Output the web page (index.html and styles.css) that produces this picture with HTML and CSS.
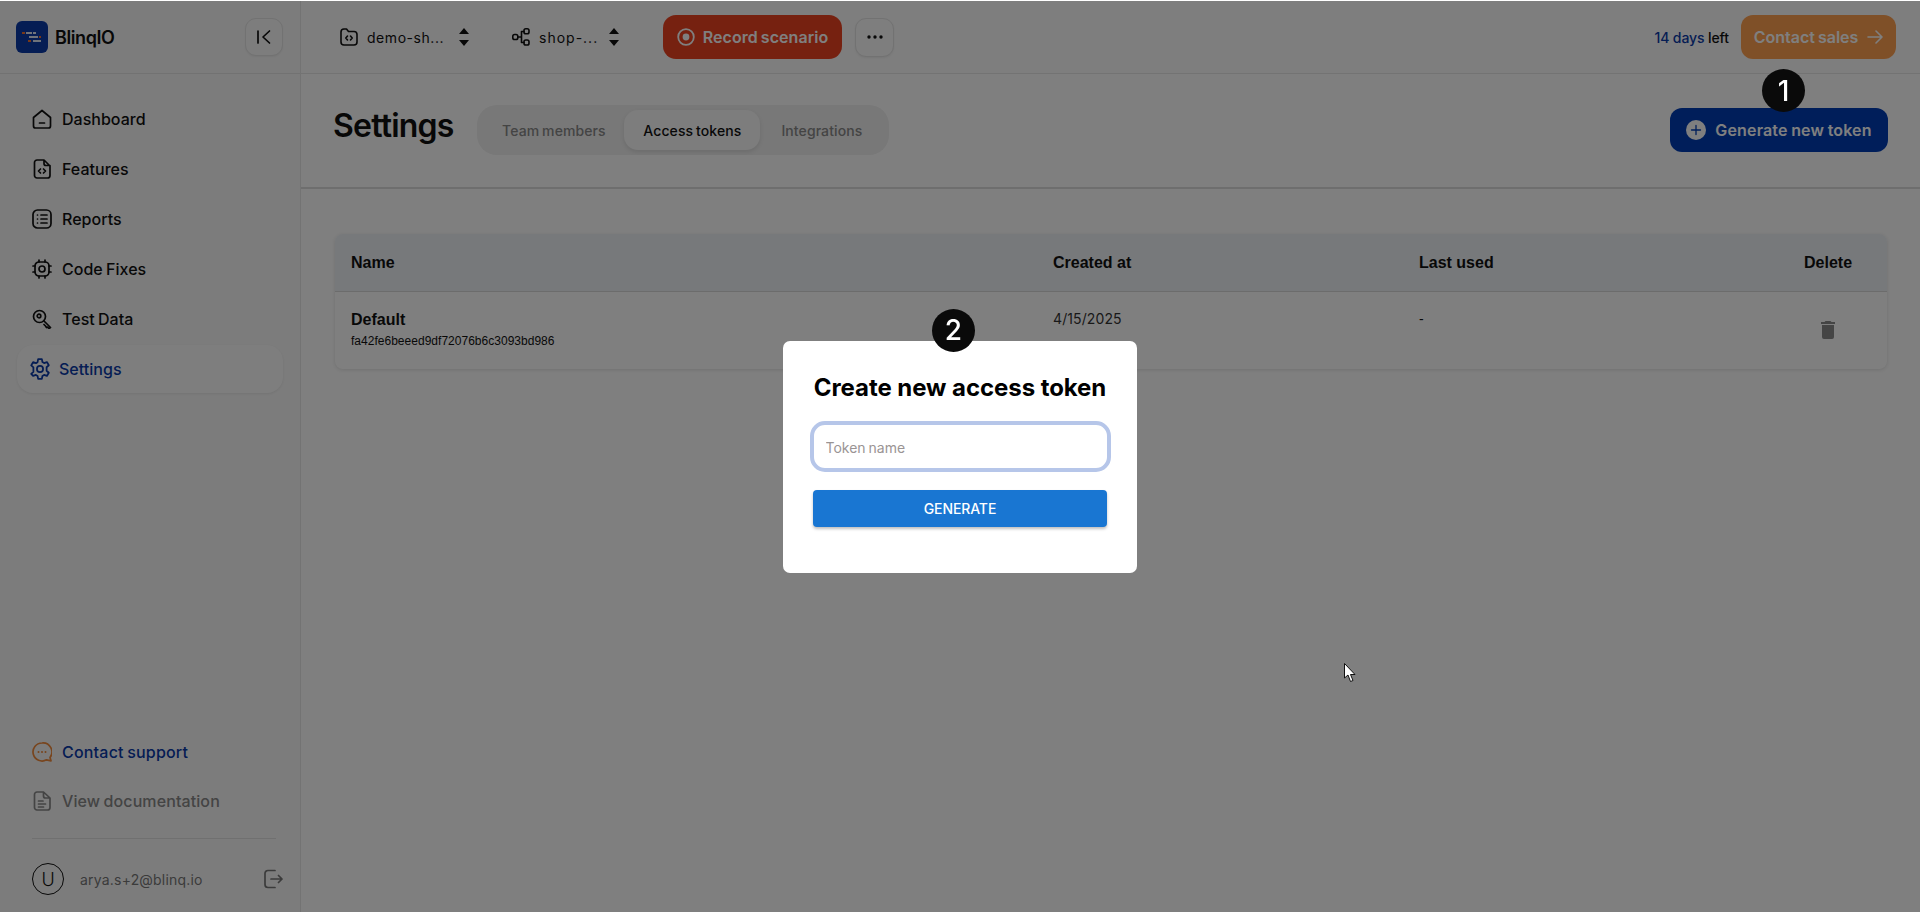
FILE: index.html
```html
<!DOCTYPE html>
<html lang="en">
<head>
<meta charset="utf-8">
<title>BlinqIO Settings</title>
<link rel="stylesheet" href="styles.css">
</head>
<body>
<div class="app">
  <aside class="sidebar">
    <div class="brand">
      <div class="logo">
        <svg viewBox="0 0 32 32" width="32" height="32"><rect width="32" height="32" rx="6" fill="#0a3aa8"/><g fill="#dfe6f5"><rect x="10" y="11" width="6" height="2"/><rect x="17" y="11" width="3" height="2"/><rect x="13" y="15" width="9" height="2"/><rect x="17" y="19" width="8" height="2"/></g><g fill="#f07030"><rect x="6" y="11" width="3" height="2"/><rect x="12" y="19" width="3" height="2"/><rect x="23" y="15" width="2" height="2"/></g></svg>
      </div>
      <span class="brand-name">BlinqIO</span>
      <button class="icon-btn collapse">
        <svg viewBox="0 0 16 16" width="16" height="16" fill="none" stroke="#111" stroke-width="1.7" stroke-linecap="round" stroke-linejoin="round"><path d="M2 2v12M13.500 2 7 8l6.500 6"/></svg>
      </button>
    </div>
    <nav class="nav">
      <a class="nav-item"><svg class="nav-icon" viewBox="0 0 20 20" fill="none" stroke="#111" stroke-width="1.700" stroke-linecap="round" stroke-linejoin="round"><path d="M1.500 8.500 10 1.500l8.500 7V17a2 2 0 0 1-2 2h-13a2 2 0 0 1-2-2zM7.500 14h5"/></svg>Dashboard</a>
      <a class="nav-item"><svg class="nav-icon" viewBox="0 0 20 20" fill="none" stroke="#111" stroke-width="1.700" stroke-linecap="round" stroke-linejoin="round"><path d="M5 1h7l6 6v9.500a2.500 2.500 0 0 1-2.500 2.500H5a2.500 2.500 0 0 1-2.500-2.500v-13A2.500 2.500 0 0 1 5 1zM12 1v3.500a2 2 0 0 0 2 2h4M8.500 10 6.500 12l2 2M11.500 10l2 2-2 2"/></svg>Features</a>
      <a class="nav-item"><svg class="nav-icon" viewBox="0 0 20 20" fill="none" stroke="#111" stroke-width="1.700" stroke-linecap="round" stroke-linejoin="round"><rect x="1" y="1" width="18" height="18" rx="4.500"/><path d="M9 6h6M9 10h6M9 14h6M5.500 6h.01M5.500 10h.01M5.500 14h.01"/></svg>Reports</a>
      <a class="nav-item"><svg class="nav-icon" viewBox="0 0 20 20" fill="none" stroke="#111" stroke-width="1.700" stroke-linecap="round" stroke-linejoin="round"><rect x="3" y="3" width="14" height="14" rx="4"/><circle cx="10" cy="10" r="3"/><path d="M7 1v2M13 1v2M7 17v2M13 17v2M1 7h2M1 13h2M17 7h2M17 13h2"/></svg>Code Fixes</a>
      <a class="nav-item"><svg class="nav-icon" viewBox="0 0 20 20" fill="none" stroke="#111" stroke-width="1.700" stroke-linecap="round" stroke-linejoin="round"><circle cx="7.500" cy="7.500" r="6"/><circle cx="7" cy="7" r="1.800"/><path d="m12 12 6.500 6.500-1.500 1-1.500-1.500-1 .5-1-1.500-1.500-1.500"/></svg>Test Data</a>
      <a class="nav-item active"><svg class="nav-icon gear" viewBox="0 0 20 20" fill="none" stroke="#0a3aa8" stroke-width="1.600" stroke-linecap="round" stroke-linejoin="round"><circle cx="10" cy="10" r="2.800"/><path d="M8.300 1h3.400l.5 2.700 1.500.9 2.600-.9 1.700 2.900-2 1.800v3.200l2 1.800-1.700 2.900-2.600-.9-1.500.9-.5 2.700H8.300l-.5-2.700-1.500-.9-2.600.9L2 14.500l2-1.800V8.500l-2-1.800 1.700-2.900 2.600.9 1.500-.9z"/></svg>Settings</a>
    </nav>
    <div class="side-foot">
      <a class="nav-item support"><svg class="nav-icon" viewBox="0 0 20 20" fill="none" stroke="#f08a3c" stroke-width="1.700" stroke-linecap="round" stroke-linejoin="round"><path d="M10 1a9 9 0 1 0 4.500 16.800l4.500 1-1-3.300A9 9 0 0 0 10 1z"/><path d="M6.500 10h.01M10 10h.01M13.500 10h.01" stroke-width="2"/></svg>Contact support</a>
      <a class="nav-item docs"><svg class="nav-icon" viewBox="0 0 20 20" fill="none" stroke="#888" stroke-width="1.700" stroke-linecap="round" stroke-linejoin="round"><path d="M5 1h6.500L18 7v9.500a2.500 2.500 0 0 1-2.500 2.500H5a2.500 2.500 0 0 1-2.500-2.500v-13A2.500 2.500 0 0 1 5 1zM11.500 1v4a2 2 0 0 0 2 2H18M6.500 10H11M6.500 13h7M6.500 16h5"/></svg>View documentation</a>
      <div class="foot-rule"></div>
      <div class="user">
        <span class="avatar">U</span>
        <span class="email">arya.s+2@blinq.io</span>
        <svg class="logout" viewBox="0 0 20 20" fill="none" stroke="#777" stroke-width="1.700" stroke-linecap="round" stroke-linejoin="round"><path d="M12 1.500H5A3 3 0 0 0 2 4.500v11a3 3 0 0 0 3 3h7M8 10h11M15.500 6.500 19 10l-3.500 3.500"/></svg>
      </div>
    </div>
  </aside>
  <main class="main">
    <header class="topbar">
      <div class="selector first">
        <svg class="sel-icon" viewBox="0 0 18 18" fill="none" stroke="#111" stroke-width="1.600" stroke-linecap="round" stroke-linejoin="round"><path d="M1 4a3 3 0 0 1 3-3h2.500l2 2.500H14a3 3 0 0 1 3 3V14a3 3 0 0 1-3 3H4a3 3 0 0 1-3-3zM7.500 8 5.800 10l1.700 2M10.500 8l1.700 2-1.700 2"/></svg>
        <span class="sel-text t1">demo-sh...</span>
        <svg class="updown" viewBox="0 0 10 18" fill="#111"><path d="M5 0 10 6H0zM5 18 0 12h10z"/></svg>
      </div>
      <div class="selector second">
        <svg class="sel-icon" viewBox="0 0 18 18" fill="none" stroke="#111" stroke-width="1.600" stroke-linecap="round" stroke-linejoin="round"><rect x=".8" y="6.500" width="5" height="5" rx="1.800"/><rect x="12" y=".8" width="5" height="5" rx="1.800"/><rect x="12" y="12" width="5" height="5" rx="1.800"/><path d="M5.800 9H9M12 3.500H9.500V14.500H12"/></svg>
        <span class="sel-text t2">shop-...</span>
        <svg class="updown" viewBox="0 0 10 18" fill="#111"><path d="M5 0 10 6H0zM5 18 0 12h10z"/></svg>
      </div>
      <button class="record">
        <svg viewBox="0 0 18 18" width="18" height="18" fill="none"><circle cx="9" cy="9" r="7.800" stroke="#fff" stroke-width="1.800"/><circle cx="9" cy="9" r="3.400" fill="#fff"/></svg>
        Record scenario
      </button>
      <button class="icon-btn more">
        <svg viewBox="0 0 16 4" width="16" height="4" fill="#111"><circle cx="2" cy="2" r="1.700"/><circle cx="8" cy="2" r="1.700"/><circle cx="14" cy="2" r="1.700"/></svg>
      </button>
      <div class="trial"><span class="days">14 days</span> left</div>
      <button class="sales">Contact sales
        <svg viewBox="0 0 16 14" width="16" height="14" fill="none" stroke="#fff" stroke-width="1.600" stroke-linecap="round" stroke-linejoin="round"><path d="M1 7h14M9 1l6 6-6 6"/></svg>
      </button>
    </header>
    <section class="page-head">
      <h1 class="title">Settings</h1>
      <div class="tabs">
        <span class="tab">Team members</span>
        <span class="tab on">Access tokens</span>
        <span class="tab">Integrations</span>
      </div>
      <button class="generate">
        <svg viewBox="0 0 20 20" width="20" height="20"><circle cx="10" cy="10" r="10" fill="#fff"/><path d="M10 5.500v9M5.500 10h9" stroke="#003db5" stroke-width="1.300" stroke-linecap="round"/></svg>
        Generate new token
      </button>
    </section>
    <section class="table-wrap">
      <div class="table">
        <div class="row head">
          <div class="c1">Name</div>
          <div class="c2">Created at</div>
          <div class="c3">Last used</div>
          <div class="c4">Delete</div>
        </div>
        <div class="row body-row">
          <div class="c1"><div class="tok-name">Default</div><div class="tok-hash">fa42fe6beeed9df72076b6c3093bd986</div></div>
          <div class="c2 date">4/15/2025</div>
          <div class="c3 dash">-</div>
          <div class="c4 trash"><svg viewBox="0 0 14 18" width="14" height="18" fill="#8a8a8a"><path d="M1 16a2 2 0 0 0 2 2h8a2 2 0 0 0 2-2V4H1zM14 1h-3.500l-1-1h-5l-1 1H0v2h14z"/></svg></div>
        </div>
      </div>
    </section>
  </main>
</div>
<div class="overlay">
  <div class="modal">
    <span class="step step2">2</span>
    <h2 class="modal-title">Create new access token</h2>
    <input class="token-input" type="text" placeholder="Token name">
    <button class="gen-btn">GENERATE</button>
  </div>
  <span class="step step1">1</span>
  <svg class="cursor" viewBox="0 0 12 20" width="12" height="20"><path d="M.5.500V15l3.500-3 2.500 6.500 2.500-1L6.500 11.500H11z" fill="#fff" stroke="#111" stroke-width="1"/></svg>
</div>
</body>
</html>
```
FILE: styles.css
```css
* { box-sizing: border-box; }
html, body { margin: 0; height: 912px; overflow: hidden; background: #fff; }
body { font-family: "Inter", "Liberation Sans", sans-serif; color: #111; padding-top: 1px; }
button { font-family: inherit; border: 0; cursor: pointer; }
.app { display: flex; height: 911px; }

.sidebar { width: 301px; flex: none; background: #f9f9f9; border-right: 1px solid #e6e6e6; display: flex; flex-direction: column; }
.brand { height: 73px; border-bottom: 1px solid #e4e4e4; display: flex; align-items: center; padding: 0 17px 0 16px; flex: none; }
.logo { width: 32px; height: 32px; }
.logo svg { display: block; }
.brand-name { margin-left: 7px; font-size: 18px; font-weight: 600; letter-spacing: -.4px; }
.icon-btn { width: 38px; height: 38px; background: #fbfbfb; border: 1px solid #e4e4e4; border-radius: 11px; display: flex; align-items: center; justify-content: center; padding: 0; box-shadow: 0 1px 2px rgba(0,0,0,.06); }
.collapse { margin-left: auto; }

.nav { padding: 21px 17px 0; display: flex; flex-direction: column; gap: 2px; }
.nav-item { height: 48px; display: flex; align-items: center; gap: 10px; padding-left: 15px; font-size: 16px; letter-spacing: .02px; word-spacing: -1px; font-weight: 500; color: #111; }
.nav-icon { width: 20px; height: 20px; flex: none; }
.active { background: #fcfcfc; color: #0a3aa8; border-radius: 16px; padding-left: 12px; gap: 8px; box-shadow: 0 1px 3px rgba(0,0,0,.08); }
.gear { width: 22px; height: 22px; }

.side-foot { margin-top: auto; padding: 0 17px 13px; }
.support { color: #0a3aa8; letter-spacing: .2px; }
.docs { color: #888; height: 50px; letter-spacing: .1px; }
.foot-rule { height: 1px; background: #e0e0e0; margin: 12px 7px 20px 15px; }
.user { display: flex; align-items: center; height: 40px; padding-left: 15px; }
.avatar { width: 32px; height: 32px; border-radius: 50%; border: 1px solid #111; display: flex; align-items: center; justify-content: center; font-size: 18px; font-weight: 300; }
.email { margin-left: 16px; font-size: 14px; color: #777; letter-spacing: .2px; }
.logout { width: 20px; height: 20px; margin-left: auto; }

.main { flex: 1; min-width: 0; display: flex; flex-direction: column; background: #fff; }
.topbar { height: 73px; background: #fcfcfc; border-bottom: 1px solid #e6e6e6; display: flex; align-items: center; padding: 0 24px 0 39px; flex: none; }
.selector { display: flex; align-items: center; }
.sel-icon { width: 18px; height: 18px; flex: none; }
.sel-text { font-size: 14px; letter-spacing: .55px; margin-left: 9px; white-space: nowrap; }
.t1 { width: 77px; }
.t2 { width: 55px; margin-left: 9px; letter-spacing: 1px; }
.updown { width: 10px; height: 18px; margin-left: 15px; }
.second { margin-left: 43px; }
.record { margin-left: 44px; width: 179px; height: 44px; border-radius: 13px; background: #ec4220; color: #fff; font-size: 16px; font-weight: 600; letter-spacing: .05px; word-spacing: -1px; display: flex; align-items: center; justify-content: center; gap: 8px; padding: 0; }
.more { margin-left: 13px; width: 39px; height: 39px; background: #fcfcfc; }
.trial { margin-left: auto; font-size: 14px; font-weight: 500; letter-spacing: -.1px; }
.days { color: #0a3aa8; }
.sales { margin-left: 12px; width: 155px; height: 44px; border-radius: 12px; background: #ffa050; color: #fff; font-size: 16px; font-weight: 600; letter-spacing: 0; word-spacing: -1px; display: flex; align-items: center; justify-content: center; gap: 9px; padding: 0; }

.page-head { height: 115px; border-bottom: 2px solid #ddd; display: flex; align-items: center; padding: 0 32px 1px 32px; flex: none; margin-bottom: 45px; }
.title { margin: 0; font-size: 32px; font-weight: 600; letter-spacing: -.8px; position: relative; top: -5px; }
.tabs { margin-left: 24px; height: 50px; width: 412px; background: #f0f0f0; border-radius: 20px; display: flex; align-items: center; padding: 0 6px; }
.tab { font-size: 14px; font-weight: 500; letter-spacing: .1px; word-spacing: -1px; color: #888; height: 40px; display: flex; align-items: center; justify-content: center; }
.tab:nth-child(1) { width: 143px; }
.tab.on { width: 138px; background: #fafafa; color: #111; border-radius: 14px; box-shadow: 0 2px 4px rgba(0,0,0,.1); }
.tab:nth-child(3) { width: 125px; }
.generate { margin-left: auto; width: 218px; height: 44px; border-radius: 12px; background: #003db5; color: #fff; font-size: 16px; font-weight: 600; letter-spacing: .15px; word-spacing: -.6px; display: flex; align-items: center; justify-content: center; gap: 9px; padding: 0; }

.table-wrap { padding: 0 33px 0 34px; }
.table { background: #fff; border-radius: 8px; box-shadow: 0 1px 4px rgba(0,0,0,.12); font-family: "Liberation Sans", Arial, sans-serif; overflow: hidden; }
.row { display: grid; grid-template-columns: 702px 366px 1fr 96px; padding-left: 16px; }
.head { height: 58px; background: #eef2f7; border-bottom: 1px solid #d8d8d8; align-items: center; font-size: 16px; font-weight: 700; }
.c4 { text-align: left; padding-left: 13px; }
.body-row { height: 77px; padding-top: 18px; }
.tok-name { font-size: 16px; font-weight: 700; line-height: 19px; }
.tok-hash { font-size: 12px; margin-top: 5px; line-height: 14px; letter-spacing: .02px; }
.date { font-family: "Inter", sans-serif; font-size: 14px; color: #333; line-height: 17px; letter-spacing: .1px; }
.dash { font-size: 14px; line-height: 19px; }
.trash { padding: 11px 0 0 30px; }
.trash svg { display: block; }

.overlay { position: fixed; inset: 1px 0 0 0; background: rgba(0,0,0,.5); display: flex; align-items: center; justify-content: center; }
.modal { position: relative; width: 354px; height: 232px; background: #fff; border-radius: 7px; display: flex; flex-direction: column; align-items: center; padding-top: 30px; }
.modal-title { margin: 0; font-size: 24px; font-weight: 700; line-height: 34px; letter-spacing: -.06px; white-space: nowrap; color: #000; }
.token-input { margin-top: 16px; width: 301px; height: 51px; border: 4px solid #b6c6e9; border-radius: 15px; padding: 2px 12px 0; font-family: "Inter", sans-serif; font-size: 14px; outline: none; background: #fff; }
.token-input::placeholder { color: #9a9494; letter-spacing: 0; word-spacing: -1px; }
.gen-btn { margin-top: 18px; width: 294px; height: 37px; border-radius: 4px; background: #1976d2; color: #fff; font-size: 14px; font-weight: 500; box-shadow: 0 2px 3px rgba(0,0,0,.25); padding: 0; letter-spacing: -.1px; }
.step { position: absolute; width: 43px; height: 43px; border-radius: 50%; background: #0a0a0a; color: #fff; font-size: 28px; font-weight: 500; display: flex; align-items: center; justify-content: center; }
.step1 { left: 1762px; top: 68px; }
.step2 { left: 149px; top: -32px; }
.cursor { position: absolute; left: 1344px; top: 662px; }
```
